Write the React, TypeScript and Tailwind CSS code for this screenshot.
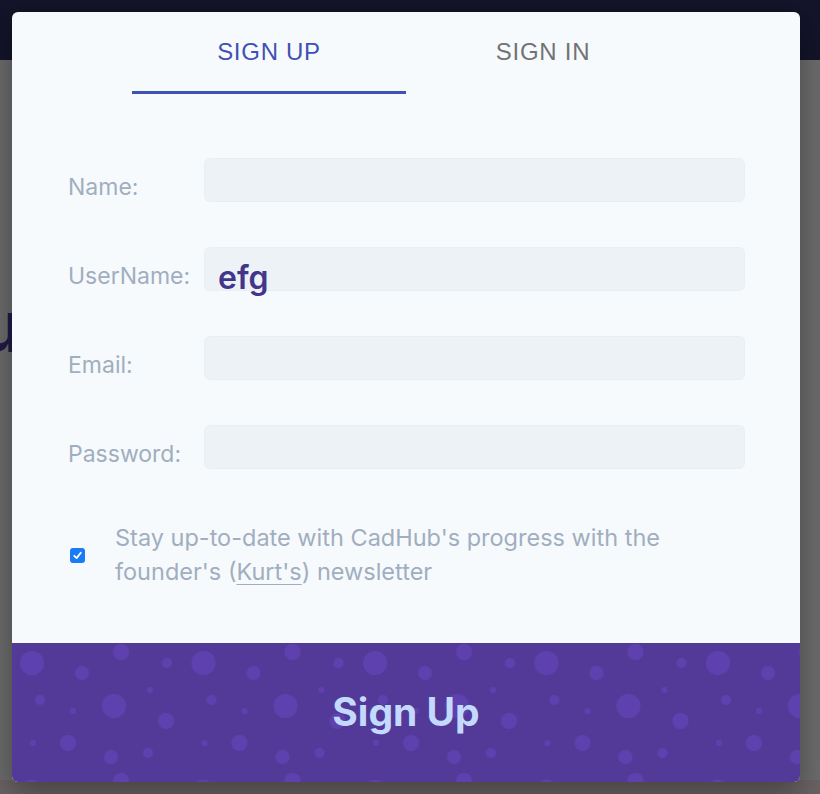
import React from "react";

const inter = { fontFamily: "Inter, 'Noto Sans', sans-serif" };

function Field({ label, value }: { label: string; value?: string }) {
  return (
    <div className="flex items-start">
      <div className="mt-[14px] w-[136px] text-[23px] leading-[30px] text-[#a0aec0]">{label}</div>
      <div className="h-[44px] flex-1 rounded-[6px] bg-[#edf2f7] pl-[14px] pt-[15px] shadow-[inset_0_0_0_1px_rgba(0,0,0,0.015)]">
        {value && (
          <div className="text-[32px] font-semibold leading-[32px] text-[#43368a]">{value}</div>
        )}
      </div>
    </div>
  );
}

export default function App() {
  return (
    <div className="relative h-[794px] w-[820px] overflow-hidden bg-[#6b6b6b]" style={inter}>
      {/* page behind the overlay */}
      <div className="absolute inset-0">
        <div className="h-[60px] bg-[#14142a]" />
        <div className="absolute left-[-22px] top-[290px] text-[72px] font-bold leading-none text-[#1f1b46]">u</div>
        <div className="absolute bottom-0 left-0 right-0 h-[14px] bg-[#6a6262]" />
      </div>

      <div className="relative p-3">
        <div className="flex h-[770px] w-[788px] flex-col rounded-[6px] bg-[#f7fafc] shadow-[0_10px_30px_rgba(0,0,0,0.35)]">
          {/* Tabs */}
          <div className="mx-auto flex w-[548px]" style={{ fontFamily: "'Liberation Sans', Arial, sans-serif" }}>
            <div className="flex h-[82px] w-1/2 flex-col">
              <div className="flex flex-1 items-center justify-center text-[24px] tracking-[0.03em] text-[#3f51b5]">SIGN UP</div>
              <div className="h-[3px] bg-[#3f51b5]" />
            </div>
            <div className="flex h-[82px] w-1/2 flex-col">
              <div className="flex flex-1 items-center justify-center text-[24px] tracking-[0.03em] text-[#717375]">SIGN IN</div>
              <div className="h-[3px]" />
            </div>
          </div>

          {/* Form */}
          <div className="mt-[64px] flex flex-col gap-[45px] pl-[56px] pr-[55px]">
            <Field label="Name:" />
            <Field label="UserName:" value="efg" />
            <Field label="Email:" />
            <Field label="Password:" />
          </div>

          {/* Newsletter */}
          <div className="mt-[52px] flex items-center gap-[30px] pl-[58px] pr-[55px]">
            <div className="flex h-[15px] w-[15px] shrink-0 items-center justify-center rounded-[3px] bg-[#1a7cf5]">
              <svg width="11" height="11" viewBox="0 0 12 12" fill="none">
                <path d="M2.5 6.3 L5 8.8 L9.6 3" stroke="white" strokeWidth="2" strokeLinecap="round" strokeLinejoin="round" />
              </svg>
            </div>
            <div className="flex-1 text-[23.5px] leading-[34px] text-[#a0aec0]">
              Stay up-to-date with CadHub's progress with the founder's (<span className="underline decoration-1 underline-offset-[4px]">Kurt's</span>) newsletter
            </div>
          </div>

          {/* Button */}
          <div className="relative mt-auto flex h-[139px] items-center justify-center overflow-hidden rounded-b-[6px] bg-[#533a98]">
            <svg className="absolute inset-0" width="788" height="139">
              <defs>
                <pattern id="bubbles" patternUnits="userSpaceOnUse" width="171.5" height="129">
                  <g fill="#5e41ae">
                    <circle cx="20" cy="20" r="12" />
                    <circle cx="109" cy="9" r="8" />
                    <circle cx="70" cy="30" r="7" />
                    <circle cx="155" cy="20" r="5" />
                    <circle cx="28" cy="57" r="5" />
                    <circle cx="61" cy="68" r="3" />
                    <circle cx="102" cy="63" r="12" />
                    <circle cx="138" cy="47" r="3" />
                    <circle cx="154" cy="78" r="8" />
                    <circle cx="21" cy="100" r="3" />
                    <circle cx="56" cy="100" r="8" />
                    <circle cx="99" cy="114" r="7" />
                    <circle cx="136" cy="110" r="5" />
                  </g>
                </pattern>
              </defs>
              <rect width="788" height="139" fill="url(#bubbles)" />
            </svg>
            <div className="relative text-[39px] font-bold text-[#c3dafe]">Sign Up</div>
          </div>
        </div>
      </div>
    </div>
  );
}
